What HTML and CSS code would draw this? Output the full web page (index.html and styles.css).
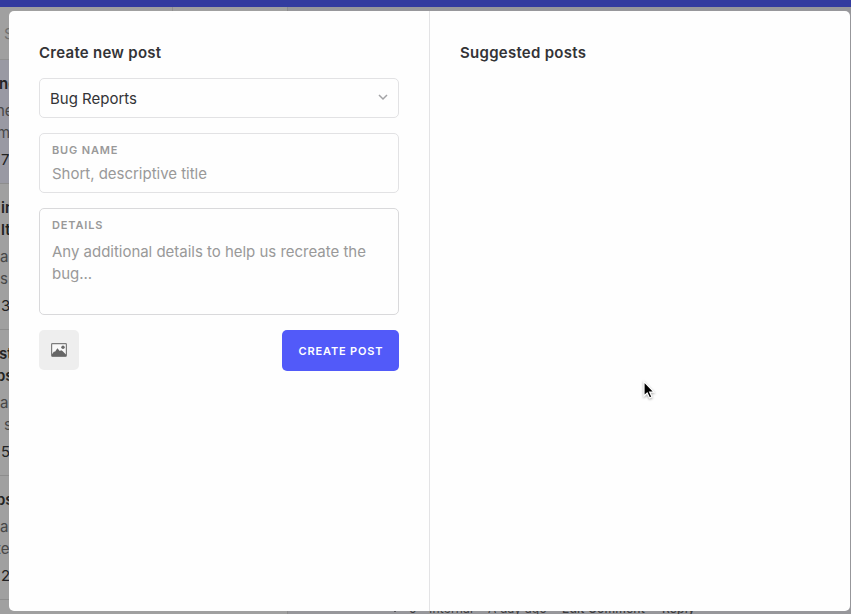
FILE: index.html
```html
<!DOCTYPE html>
<html lang="en">
<head>
<meta charset="utf-8">
<title>Create new post</title>
<link rel="stylesheet" href="styles.css">
</head>
<body>
<div class="app">
  <div class="topbar"></div>
  <div class="workspace">
    <aside class="posts">
      <div class="search"><span>S</span><i></i></div>
      <article class="post selected">
        <h3><span>ne</span></h3>
        <p><span class="far">he</span><span class="near">m</span></p>
        <b>7</b>
      </article>
      <article class="post">
        <h3><span class="in">in</span><span class="in">lt</span></h3>
        <p><span>a</span><span>s</span></p>
        <b>3</b>
      </article>
      <article class="post">
        <h3><span>st</span><span class="far">bs</span></h3>
        <p><span>a</span><span class="shift">s</span></p>
        <b>5</b>
      </article>
      <article class="post">
        <h3><span class="far">bs</span></h3>
        <p><span>a</span><span class="far">te</span></p>
        <b>2</b>
      </article>
    </aside>
    <main class="thread">
      <footer class="comment">
        <svg width="10" height="10" viewBox="0 0 10 10"><path d="M1 4l4 4 4-4"/></svg>
        <span class="count">0</span>
        <span class="internal">Internal</span>
        <span class="age">A day ago</span>
        <span class="edit">Edit Comment</span>
        <span class="reply">Reply</span>
      </footer>
    </main>
  </div>
</div>

<div class="modal">
  <section class="create">
    <h2><span>Create new post</span></h2>
    <div class="select">
      <span>Bug Reports</span>
      <svg width="10" height="7" viewBox="0 0 10 7"><path d="M1 1l4 4 4-4"/></svg>
    </div>
    <div class="field">
      <label>BUG NAME</label>
      <div class="placeholder">Short, descriptive title</div>
    </div>
    <div class="field details">
      <label>DETAILS</label>
      <div class="placeholder">Any additional details to help us recreate the bug...</div>
    </div>
    <div class="actions">
      <button class="image" aria-label="Add image">
        <svg width="16" height="14" viewBox="0 0 16 14">
          <rect x=".6" y=".6" width="14.8" height="12.8" rx=".8" fill="#f8f8f8" stroke="#7c7c7c" stroke-width="1.2"/>
          <path d="M1 13V11.2L3 8.6l1 .2L6.4 5.3l2.3 2.8 1.5-.9 1.3.8L15 11.6V13z" fill="#656565"/>
          <circle cx="12" cy="4.3" r="1.7" fill="#686868"/>
        </svg>
      </button>
      <button class="submit">CREATE POST</button>
    </div>
  </section>
  <section class="suggested">
    <h2><span>Suggested posts</span></h2>
  </section>
</div>

<svg class="cursor" width="16" height="22" viewBox="0 0 16 22">
  <path d="M2 1.5V16l3.2-3 2.3 5 2.5-1.1-2.3-4.8H12z"/>
</svg>
</body>
</html>
```
FILE: styles.css
```css
* { box-sizing: border-box; }
body {
  margin: 0;
  width: 851px;
  height: 614px;
  overflow: hidden;
  font-family: Inter, "Liberation Sans", sans-serif;
  font-size: 15px;
  color: #333336;
}
.app { height: 614px; overflow: hidden; background: #999; }
.topbar { height: 7px; background: #333b9f; }
.workspace { display: flex; height: 607px; }
.posts {
  width: 288px;
  flex: none;
  overflow: hidden;
  border-right: 1px solid #8d8d8d;
  background: #a0a0a0;
}
.search {
  display: flex;
  height: 53px;
  align-items: center;
  border-bottom: 1px solid #919191;
  color: #707070;
}
.search span { width: 168px; margin-left: 4px; }
.search i { width: 1px; height: 52px; background: #909090; }
.post {
  height: 146px;
  padding-top: 13.4px;
  border-bottom: 1px solid #8d8d8d;
  line-height: 22px;
  color: #484848;
}
.post.selected, .post:last-child { height: 124px; }
.post.selected { background: #9999a3; }
.post h3, .post p { margin: 0 0 5px; font-size: 15px; }
.post h3 { color: #222; font-weight: 600; }
.post span { display: block; margin-left: -1px; }
.post p span { margin-left: 0; }
.post .far, .post p .far { margin-left: -4px; }
.post p .near { margin-left: -3px; }
.post p .shift { margin-left: 4px; }
.post .in { margin-left: 1px; }
.post b { display: block; margin-left: 1px; font-weight: 400; color: #222; }
.thread {
  flex: 1;
  display: flex;
  align-items: flex-end;
  overflow: hidden;
  background: #97979b;
}
.comment {
  display: flex;
  align-items: center;
  height: 16px;
  margin: 0 0 -3px 102px;
  font-size: 12px;
  line-height: 16px;
  letter-spacing: .2px;
  color: #3d3d40;
  white-space: nowrap;
}
.comment svg { fill: none; stroke: #55555a; }
.comment .count { width: 10px; margin: 0 10px 0 9px; }
.comment .internal { width: 59px; }
.comment .age { width: 74px; }
.comment .edit { width: 100px; font-weight: 500; }
.comment .reply { font-weight: 500; }

.modal {
  position: absolute;
  left: 9px;
  top: 11px;
  display: flex;
  width: 841px;
  height: 600px;
  border-radius: 5px;
  background: #fefefe;
}
.create { width: 421px; padding: 30px; border-right: 1px solid #e3e3e5; }
.suggested { flex: 1; padding: 30px; }
h2 {
  margin: 0 0 14px;
  padding-top: 1px;
  font-size: 15px;
  font-weight: 600;
  line-height: 22px;
  letter-spacing: .27px;
}
.select {
  display: flex;
  align-items: center;
  justify-content: space-between;
  height: 40px;
  padding: 0 10px;
  border: 1px solid #e2e2e4;
  border-radius: 5px;
}
.select svg { fill: none; stroke: #a3a3a6; stroke-width: 1.5; margin-top: -2px; }
.field {
  height: 60px;
  margin-top: 15px;
  padding: 9px 12px;
  border: 1px solid #e2e2e4;
  border-radius: 5px;
  color: #999;
}
.field.details { height: 107px; border-color: #d9d9db; }
label {
  display: block;
  font-size: 11px;
  font-weight: 600;
  line-height: 14px;
  letter-spacing: .85px;
}
.placeholder { margin-top: 6px; line-height: 22px; letter-spacing: -.02px; }
.details .placeholder { margin-top: 9px; }
.actions { display: flex; justify-content: space-between; margin-top: 15px; }
button { padding: 0; border: 0; border-radius: 5px; font-family: inherit; }
.image {
  display: flex;
  align-items: center;
  justify-content: center;
  width: 40px;
  height: 40px;
  background: #eee;
}
.submit {
  width: 117px;
  height: 41px;
  padding-left: 1px;
  background: #525af9;
  color: #fff;
  font-size: 11px;
  font-weight: 600;
  letter-spacing: .83px;
}
.cursor { position: absolute; left: 642px; top: 380px; filter: drop-shadow(0 1px 1px rgba(0,0,0,.35)); }
.cursor path { fill: #000; stroke: #fff; stroke-width: 1.2; }
```
